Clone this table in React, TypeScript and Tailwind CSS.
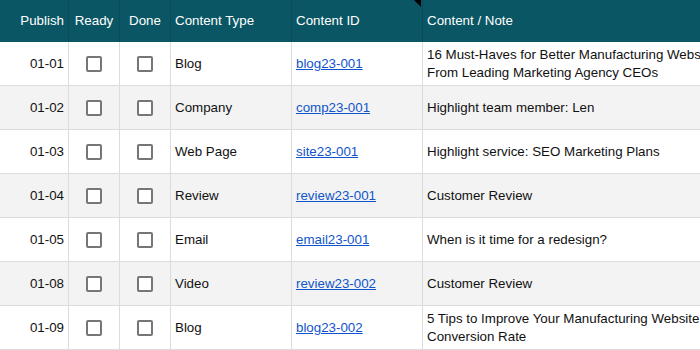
import React from "react";

const rows = [
  { d: "01-01", type: "Blog", id: "blog23-001", note: "16 Must-Haves for Better Manufacturing Websites From Leading Marketing Agency CEOs" },
  { d: "01-02", type: "Company", id: "comp23-001", note: "Highlight team member: Len" },
  { d: "01-03", type: "Web Page", id: "site23-001", note: "Highlight service: SEO Marketing Plans" },
  { d: "01-04", type: "Review", id: "review23-001", note: "Customer Review" },
  { d: "01-05", type: "Email", id: "email23-001", note: "When is it time for a redesign?" },
  { d: "01-08", type: "Video", id: "review23-002", note: "Customer Review" },
  { d: "01-09", type: "Blog", id: "blog23-002", note: "5 Tips to Improve Your Manufacturing Website Conversion Rate" },
];

const grid = "grid grid-cols-[69px_51px_51px_121px_131px_330px]";

function Box() {
  return <div className="w-4 h-4 border-2 border-[#767676] rounded-[2px] bg-white" />;
}

export default function App() {
  return (
    <div
      className="w-[700px] h-[350px] overflow-hidden bg-white text-[13.33px] text-[#111]"
      style={{ fontFamily: '"Liberation Sans", Arial, sans-serif' }}
    >
      <div className="w-[753px]">
        <div className={`${grid} h-[42px] bg-[#0b5664] text-white`}>
          <div className="flex items-center justify-end pr-1 border-r border-[#0a4b57]">Publish</div>
          <div className="flex items-center justify-center border-r border-[#0a4b57]">Ready</div>
          <div className="flex items-center justify-center border-r border-[#0a4b57]">Done</div>
          <div className="flex items-center pl-1 border-r border-[#0a4b57]">Content Type</div>
          <div className="relative flex items-center pl-1 border-r border-[#0a4b57]">
            Content ID
            <div className="absolute top-0 right-[1px] w-0 h-0 border-t-[7px] border-t-black border-l-[7px] border-l-transparent" />
          </div>
          <div className="flex items-center pl-1">Content / Note</div>
        </div>
        {rows.map((r, i) => (
          <div
            key={r.d}
            className={`${grid} h-[44px] border-b border-[#dcdcdc] ${i % 2 === 1 ? "bg-[#f3f3f3]" : "bg-white"}`}
          >
            <div className="flex items-center justify-end pr-1 border-r border-[#dcdcdc]">{r.d}</div>
            <div className="flex items-center justify-center border-r border-[#dcdcdc]"><Box /></div>
            <div className="flex items-center justify-center border-r border-[#dcdcdc]"><Box /></div>
            <div className="flex items-center pl-1 border-r border-[#dcdcdc]">{r.type}</div>
            <div className="flex items-center pl-1 border-r border-[#dcdcdc]">
              <span className="text-[#1155cc] underline">{r.id}</span>
            </div>
            <div className="flex items-center pl-1 leading-[18px]">
              <span className="w-[315px]">{r.note}</span>
            </div>
          </div>
        ))}
      </div>
    </div>
  );
}
